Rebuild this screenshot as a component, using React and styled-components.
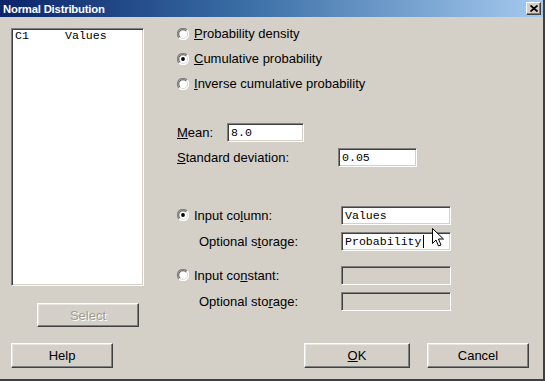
import React from "react";
import styled, { createGlobalStyle } from "styled-components";

const GlobalStyle = createGlobalStyle`
  html, body {
    margin: 0;
    padding: 0;
    background: #d4d0c8;
  }
  * { box-sizing: border-box; }
`;

const Window = styled.div`
  position: relative;
  width: 545px;
  height: 381px;
  background: #d4d0c8;
  font-family: "Liberation Sans", Arial, sans-serif;
  font-size: 13px;
  color: #000;
  border-right: 2px solid #404040;
  border-bottom: 2px solid #404040;
  display: flex;
  flex-direction: column;
  overflow: hidden;
`;

const TitleBar = styled.div`
  height: 17px;
  display: flex;
  align-items: center;
  justify-content: space-between;
  padding: 0 2px 0 3px;
  background: linear-gradient(to right, #0a246a 0%, #3a6ea5 45%, #a6caf0 100%);
`;

const TitleText = styled.span`
  color: #fff;
  font-weight: bold;
  font-size: 11.3px;
  letter-spacing: -0.2px;
`;

const CloseButton = styled.button`
  width: 15px;
  height: 13px;
  padding: 0;
  display: flex;
  align-items: center;
  justify-content: center;
  background: #d4d0c8;
  border: 1px solid;
  border-color: #fff #404040 #404040 #fff;
  box-shadow: inset -1px -1px #808080;
`;

const Body = styled.div`
  display: grid;
  grid-template-columns: 133px 1fr;
  column-gap: 33px;
  padding: 4px 0 0 11px;
`;

const LeftColumn = styled.div`
  display: flex;
  flex-direction: column;
  padding-top: 7px;
`;

const ListBox = styled.div`
  height: 258px;
  background: #fff;
  border: 1px solid;
  border-color: #808080 #fff #fff #808080;
  box-shadow: inset 1px 1px #404040, inset -1px -1px #d4d0c8;
  padding: 1px 0 0 3px;
  font-family: "Liberation Mono", "Courier New", monospace;
  font-size: 11.6px;
`;

const ListRow = styled.div`
  display: flex;
  height: 11px;
  align-items: center;
`;

const ListCell = styled.span`
  width: ${(p) => p.$w}px;
`;

const Button = styled.button`
  width: ${(p) => p.$w}px;
  height: ${(p) => p.$h || 25}px;
  margin-left: ${(p) => p.$ml || 0}px;
  padding: 0;
  background: #d4d0c8;
  font-family: "Liberation Sans", Arial, sans-serif;
  font-size: 13px;
  color: ${(p) => (p.disabled ? "#a09c94" : "#000")};
  text-shadow: ${(p) => (p.disabled ? "1px 1px #fff" : "none")};
  border: 1px solid;
  border-color: #fff #404040 #404040 #fff;
  box-shadow: inset -1px -1px #808080, inset 1px 1px #e8e6e0;
`;

const SelectWrap = styled.div`
  margin-top: 17px;
`;

const RightColumn = styled.div`
  display: flex;
  flex-direction: column;
`;

const RadioRow = styled.label`
  height: ${(p) => p.$h || 25}px;
  display: flex;
  align-items: center;
  gap: 5px;
`;

const FieldGrid = styled.div`
  display: grid;
  grid-template-columns: ${(p) => p.$label}px ${(p) => p.$input}px;
  grid-auto-rows: ${(p) => p.$row}px;
  align-items: center;
  margin-top: ${(p) => p.$mt || 0}px;
`;

const Label = styled.span`
  display: flex;
  align-items: center;
  gap: 5px;
  padding-left: ${(p) => p.$indent || 0}px;
`;

const Field = styled.div`
  position: relative;
  height: 19px;
  background: ${(p) => (p.$disabled ? "#d4d0c8" : "#fff")};
  border: 1px solid;
  border-color: #808080 #fff #fff #808080;
  box-shadow: inset 1px 1px #404040, inset -1px -1px #d4d0c8;
  padding: 0 0 0 3px;
  display: flex;
  align-items: center;
  font-family: "Liberation Mono", "Courier New", monospace;
  font-size: 11.6px;
  color: #000;
`;

const Caret = styled.span`
  display: inline-block;
  width: 1px;
  height: 13px;
  background: #000;
  margin-left: 1px;
`;

const Footer = styled.div`
  display: flex;
  justify-content: space-between;
  padding: 0 14px 0 11px;
  margin-top: 16px;
`;

const FooterGroup = styled.div`
  display: flex;
  gap: 17px;
`;

const Pointer = styled.svg`
  position: absolute;
  left: 432px;
  top: 228px;
`;

const U = styled.span`
  text-decoration: underline;
  text-underline-offset: 1px;
`;

function Radio({ checked }) {
  return (
    <svg width="12" height="12" viewBox="0 0 12 12">
      <path d="M10 2 A5.5 5.5 0 0 0 2 10" fill="none" stroke="#808080" strokeWidth="1.2" />
      <path d="M2 10 A5.5 5.5 0 0 0 10 2" fill="none" stroke="#fff" strokeWidth="1.2" />
      <circle cx="6" cy="6" r="4.3" fill="#fff" />
      <path d="M9 3 A4.2 4.2 0 0 0 3 9" fill="none" stroke="#404040" strokeWidth="0.9" />
      {checked && <circle cx="6" cy="6" r="1.9" fill="#000" />}
    </svg>
  );
}

export default function App() {
  return (
    <>
      <GlobalStyle />
      <Window>
        <TitleBar>
          <TitleText>Normal Distribution</TitleText>
          <CloseButton aria-label="Close">
            <svg width="8" height="7" viewBox="0 0 8 7">
              <path d="M0.5 0.5 L7.5 6.5 M7.5 0.5 L0.5 6.5" stroke="#000" strokeWidth="1.8" />
            </svg>
          </CloseButton>
        </TitleBar>

        <Body>
          <LeftColumn>
            <ListBox>
              <ListRow>
                <ListCell $w={50}>C1</ListCell>
                <ListCell $w={60}>Values</ListCell>
              </ListRow>
            </ListBox>
            <SelectWrap>
              <Button $w={102} $h={24} $ml={26} disabled>
                Select
              </Button>
            </SelectWrap>
          </LeftColumn>

          <RightColumn>
            <RadioRow>
              <Radio />
              <span><U>P</U>robability density</span>
            </RadioRow>
            <RadioRow>
              <Radio checked />
              <span><U>C</U>umulative probability</span>
            </RadioRow>
            <RadioRow>
              <Radio />
              <span><U>I</U>nverse cumulative probability</span>
            </RadioRow>

            <FieldGrid $label={50} $input={77} $row={25} $mt={24}>
              <Label><span><U>M</U>ean:</span></Label>
              <Field>8.0</Field>
            </FieldGrid>
            <FieldGrid $label={161} $input={79} $row={25}>
              <Label><span><U>S</U>tandard deviation:</span></Label>
              <Field>0.05</Field>
            </FieldGrid>

            <FieldGrid $label={164} $input={110} $row={26} $mt={32}>
              <Label>
                <Radio checked />
                <span>Input co<U>l</U>umn:</span>
              </Label>
              <Field>Values</Field>
              <Label $indent={22}>
                <span>Optional s<U>t</U>orage:</span>
              </Label>
              <Field>
                Probability
                <Caret />
              </Field>
            </FieldGrid>

            <FieldGrid $label={164} $input={110} $row={26} $mt={8}>
              <Label>
                <Radio />
                <span>Input co<U>n</U>stant:</span>
              </Label>
              <Field $disabled />
              <Label $indent={22}>
                <span>Optional sto<U>r</U>age:</span>
              </Label>
              <Field $disabled />
            </FieldGrid>
          </RightColumn>
        </Body>

        <Footer>
          <Button $w={102}>Help</Button>
          <FooterGroup>
            <Button $w={106}><U>O</U>K</Button>
            <Button $w={102}>Cancel</Button>
          </FooterGroup>
        </Footer>

        <Pointer width="13" height="20" viewBox="0 0 13 20">
          <path
            d="M0.5 0.5 L0.5 15.5 L4 12 L6.5 18 L9 17 L6.5 11 L11.5 11 Z"
            fill="#fff"
            stroke="#000"
            strokeWidth="1"
          />
        </Pointer>
      </Window>
    </>
  );
}
